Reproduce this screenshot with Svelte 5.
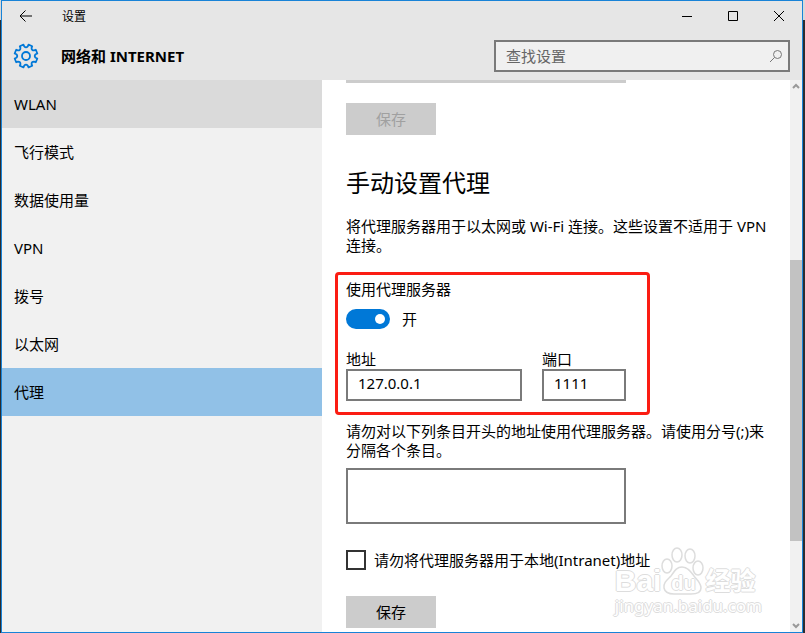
<script>
  // Constants
  const pages = ['WLAN', '飞行模式', '数据使用量', 'VPN', '拨号', '以太网', '代理'];
  const scroll = { before: 168, thumb: 281, after: 79 };

  // State
  let hovered = $state('WLAN');
  let current = $state('代理');
  let search = $state('');
  let enabled = $state(true);
  let address = $state('127.0.0.1');
  let port = $state('1111');
  let exceptions = $state('');
  let bypassLocal = $state(false);

  // Gear outline: teeth joined by rounded valleys
  function gearPath(teeth, outer, inner) {
    const step = (Math.PI * 2) / teeth;
    const at = (angle, radius) =>
      `${(13 + radius * Math.cos(angle)).toFixed(2)} ${(13 + radius * Math.sin(angle)).toFixed(2)}`;
    let path = '';
    for (let i = 0; i < teeth; i++) {
      const middle = i * step + step / 2;
      path += `${i ? 'L' : 'M'}${at(middle - 0.22 * step, outer)}L${at(middle + 0.22 * step, outer)}`;
      path += `L${at(middle + 0.27 * step, inner + 1)}Q${at(middle + 0.5 * step, inner - 1)} ${at(middle + 0.73 * step, inner + 1)}`;
    }
    return `${path}Z`;
  }
</script>

<div class="desktop">
  <div class="window">
    <header class="header">
      <div class="titlebar">
        <button class="back" aria-label="返回">
          <svg width="14" height="12" viewBox="0 0 14 12"><path d="M13 6H1M6.500 0.500L1 6l5.500 5.500" /></svg>
        </button>
        <span class="title">设置</span>
        <button class="control" aria-label="最小化">
          <svg width="12" height="12" viewBox="0 0 12 12"><path d="M1 6.500h10" /></svg>
        </button>
        <button class="control" aria-label="最大化">
          <svg width="12" height="12" viewBox="0 0 12 12"><path d="M1.500 1.500h9v9h-9z" /></svg>
        </button>
        <button class="control" aria-label="关闭">
          <svg width="12" height="12" viewBox="0 0 12 12"><path d="M1 1l10 10M11 1L1 11" /></svg>
        </button>
      </div>
      <div class="heading">
        <svg class="gear" width="26" height="26" viewBox="0 0 26 26">
          <path d={gearPath(8, 11.6, 8.8)} />
          <circle cx="13" cy="13" r="4" />
        </svg>
        <h1>网络和 INTERNET</h1>
        <label class="search">
          <input type="text" placeholder="查找设置" aria-label="查找设置" bind:value={search} />
          <svg width="14" height="14" viewBox="0 0 14 14"><circle cx="8.500" cy="5.500" r="4" /><path d="M5.500 8.500L1 13" /></svg>
        </label>
      </div>
    </header>

    <div class="body">
      <nav class="sidebar">
        {#each pages as page}
          <button
            class="page"
            class:page--hovered={page === hovered}
            class:page--current={page === current}
            onmouseenter={() => (hovered = page)}
            onclick={() => (current = page)}>
            {page}
          </button>
        {/each}
      </nav>

      <main class="content">
        <div class="script-edge"></div>
        <button class="save" disabled>保存</button>

        <h2>手动设置代理</h2>
        <p>将代理服务器用于以太网或 Wi-Fi 连接。这些设置不适用于 VPN 连接。</p>

        <section class="proxy">
          <label class="caption" for="enabled">使用代理服务器</label>
          <div class="switch">
            <input id="enabled" type="checkbox" role="switch" bind:checked={enabled} />
            <span>{enabled ? '开' : '关'}</span>
          </div>
          <div class="fields">
            <label class="field field--address">地址<input type="text" bind:value={address} /></label>
            <label class="field field--port">端口<input type="text" bind:value={port} /></label>
          </div>
        </section>

        <label class="caption" for="exceptions">请勿对以下列条目开头的地址使用代理服务器。请使用分号(;)来分隔各个条目。</label>
        <textarea id="exceptions" bind:value={exceptions}></textarea>

        <label class="check">
          <input type="checkbox" bind:checked={bypassLocal} />
          请勿将代理服务器用于本地(Intranet)地址
        </label>
        <button class="save">保存</button>

        <div class="watermark">
          <div class="brand">
            <span class="brand-bai">Bai</span>
            <span class="paw">
              <svg width="44" height="48" viewBox="0 0 44 48">
                <ellipse cx="6" cy="19" rx="5" ry="7" />
                <ellipse cx="16" cy="8" rx="5" ry="7" />
                <ellipse cx="29" cy="9" rx="5" ry="7" />
                <ellipse cx="37" cy="21" rx="5" ry="7" />
                <path d="M21 20c-6 0-8 5-11 9-4 4-8 7-7 12 1 5 6 6 10 6h17c5 0 10-1 10-6 0-5-4-8-7-12-3-4-6-9-12-9z" />
              </svg>
              <span class="brand-du">du</span>
            </span>
            <span class="brand-name">经验</span>
          </div>
          <div class="site">jingyan.baidu.com</div>
        </div>
      </main>

      <div class="scrollbar">
        <svg width="12" height="12" viewBox="0 0 12 12"><path d="M3 8l3-3 3 3" /></svg>
        <div style:flex-grow={scroll.before}></div>
        <div class="thumb" style:flex-grow={scroll.thumb}></div>
        <div style:flex-grow={scroll.after}></div>
        <svg width="12" height="12" viewBox="0 0 12 12"><path d="M3 4l3 3 3-3" /></svg>
      </div>
    </div>
  </div>
</div>

<style>
  :global(body) {
    margin: 0;
  }

  .desktop {
    background: linear-gradient(#d8d8d8 20px, #2b2d30 20px);
    box-sizing: border-box;
    color: #000;
    display: flex;
    font-family: "Noto Sans", "Noto Sans CJK SC", sans-serif;
    font-size: 15px;
    line-height: 19px;
    min-height: 100vh;
    padding: 0 2px 0 1px;
  }

  .window {
    border: 1px solid #1883d7;
    display: flex;
    flex-direction: column;
    flex-grow: 1;
    min-width: 0;
  }

  button,
  input,
  textarea {
    border: 0;
    border-radius: 0;
    box-sizing: border-box;
    color: inherit;
    font: inherit;
    margin: 0;
    padding: 0;
  }

  svg {
    display: block;
    fill: none;
    stroke: #000;
  }

  .header {
    background: #e6e6e6;
    height: 79px;
  }

  .titlebar {
    align-items: center;
    display: flex;
    height: 30px;
  }

  .back,
  .control {
    align-items: center;
    background: none;
    display: flex;
    height: 30px;
    justify-content: center;
    width: 46px;
  }

  .back {
    width: 48px;
  }

  .title {
    flex-grow: 1;
    font-size: 12px;
    padding-left: 12px;
  }

  .heading {
    align-items: center;
    display: flex;
    padding: 9px 12px 0 11px;
  }

  .gear {
    stroke: #0078d7;
    stroke-linejoin: round;
    stroke-width: 1.8;
  }

  h1 {
    flex-grow: 1;
    font-size: 15px;
    font-weight: 700;
    margin: 0;
    padding-left: 22px;
  }

  .search {
    align-items: center;
    background: #f0f0f0;
    border: 2px solid #7a7a7a;
    box-sizing: border-box;
    display: flex;
    height: 32px;
    padding: 0 5px 0 10px;
    width: 296px;
  }

  .search input {
    background: none;
    flex-grow: 1;
    min-width: 0;
    outline: 0;
  }

  .search input::placeholder {
    color: #666;
    opacity: 1;
  }

  .search svg {
    stroke: #777;
  }

  .body {
    display: flex;
    flex-grow: 1;
  }

  .sidebar {
    background: #f1f1f1;
    flex: 0 0 320px;
  }

  .page {
    background: none;
    display: block;
    height: 48px;
    padding-left: 12px;
    text-align: left;
    width: 100%;
  }

  .page--hovered {
    background: #dadada;
  }

  .page--current {
    background: #91c1e7;
  }

  .content {
    background: #fff;
    flex-grow: 1;
    min-width: 0;
    padding: 0 12px 4px 24px;
    position: relative;
  }

  .script-edge {
    background: #ccc;
    height: 3px;
    margin-bottom: 20px;
    width: 280px;
  }

  .save {
    background: #ccc;
    display: block;
    height: 32px;
    width: 90px;
  }

  .save:disabled {
    color: #a0a0a0;
  }

  h2 {
    font-size: 24px;
    font-weight: 400;
    line-height: 32px;
    margin: 32px 0 18px;
  }

  p {
    margin: 0 0 17px;
  }

  .proxy {
    border: 3px solid #fb1d13;
    border-radius: 4px;
    box-sizing: border-box;
    margin: 0 0 7px -11px;
    padding: 5px 8px 11px;
    width: 315px;
  }

  .caption {
    display: block;
  }

  .switch {
    align-items: center;
    display: flex;
    gap: 12px;
    margin: 10px 0 21px;
  }

  .switch input {
    appearance: none;
    background: #0078d7;
    border-radius: 10px;
    display: flex;
    height: 20px;
    justify-content: flex-end;
    padding: 5px;
    width: 44px;
  }

  .switch input::before {
    background: #fff;
    border-radius: 50%;
    content: "";
    height: 10px;
    width: 10px;
  }

  .switch input:not(:checked) {
    background: #7a7a7a;
    justify-content: flex-start;
  }

  .fields {
    display: flex;
    gap: 20px;
  }

  .field {
    display: flex;
    flex-direction: column;
    width: 176px;
  }

  .field--port {
    width: 84px;
  }

  .field input,
  textarea {
    background: #fff;
    border: 2px solid #7a7a7a;
  }

  .field input {
    height: 32px;
    padding: 0 10px 4px;
    width: 100%;
  }

  textarea {
    display: block;
    height: 56px;
    margin: 8px 0 26px;
    padding: 4px 10px;
    resize: none;
    width: 280px;
  }

  .check {
    align-items: center;
    display: flex;
    gap: 8px;
    margin-bottom: 26px;
  }

  .check input {
    appearance: none;
    border: 2px solid #333;
    height: 20px;
    width: 20px;
  }

  .check input:checked {
    background: #0078d7;
  }

  .watermark {
    bottom: 17px;
    color: #fff;
    font-family: "Liberation Sans", "Noto Sans CJK SC", sans-serif;
    pointer-events: none;
    position: absolute;
    right: 28px;
    text-shadow: 1px 0 #ddd, -1px 0 #ddd, 0 1px #ddd, 0 -1px #ddd;
  }

  .watermark svg {
    fill: #fff;
    stroke: #ddd;
    stroke-width: 1.5;
  }

  .brand {
    align-items: flex-end;
    display: flex;
    font-weight: 700;
    line-height: 28px;
    margin-bottom: 2px;
  }

  .brand-bai {
    font-size: 30px;
  }

  .paw {
    display: grid;
  }

  .paw svg,
  .brand-du {
    grid-area: 1 / 1;
  }

  .brand-du {
    align-self: end;
    font-size: 20px;
    justify-self: center;
    line-height: 24px;
  }

  .brand-name {
    font-size: 25px;
  }

  .site {
    font-family: "Noto Sans", sans-serif;
    font-size: 17px;
    line-height: 18px;
  }

  .scrollbar {
    background: #f1f1f1;
    display: flex;
    flex: 0 0 12px;
    flex-direction: column;
  }

  .scrollbar svg {
    stroke: #999;
    stroke-width: 2;
  }

  .thumb {
    background: #c2c2c2;
  }
</style>
